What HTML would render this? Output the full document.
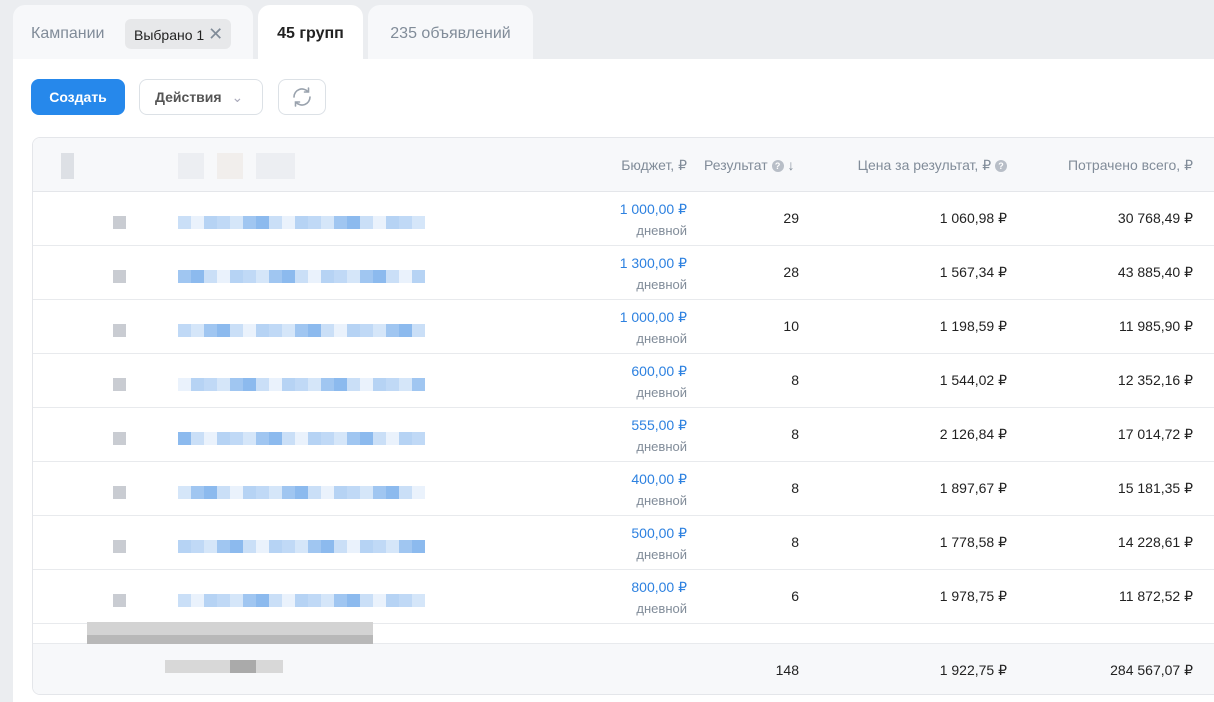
<!DOCTYPE html>
<html><head><meta charset="utf-8"><style>
*{box-sizing:border-box;margin:0;padding:0}
body{width:1214px;height:702px;overflow:hidden;background:#ebedf0;font-family:"Liberation Sans",sans-serif;position:relative;color:#222}
.a{position:absolute}
.tab{position:absolute;top:5px;height:54px;border-radius:12px 12px 0 0;background:#f7f8fa;font-size:16px;color:#818c99;line-height:58px}
.panel{position:absolute;left:13px;top:59px;width:1201px;height:643px;background:#fff}
.tbl{position:absolute;left:32px;top:137px;width:1200px;height:558px;border:1px solid #e4e6ea;border-radius:8px;background:#fff;overflow:hidden}
.hdr{position:absolute;left:0;top:0;width:100%;height:54px;background:#f7f8fa;border-bottom:1px solid #e4e6ea;font-size:14px;color:#818c99}
.row{position:absolute;left:0;width:100%;height:54px;border-bottom:1px solid #e8eaed;font-size:14px}
.r{position:absolute;text-align:right}
.b{color:#2d81e0}
.s{color:#818c99;font-size:13px}
.px{position:absolute;height:13px}
.q{display:inline-block;width:12px;height:12px;border-radius:50%;background:#b8bec7;color:#fff;font-size:9px;line-height:12px;text-align:center;vertical-align:1px;font-weight:bold}
</style></head><body>
<div class="tab" style="left:13px;width:240px"><span style="position:absolute;left:18px">Кампании</span>
<span style="position:absolute;left:112px;top:14px;height:30px;width:106px;background:#e7e8ea;border-radius:6px;font-size:14px;color:#222;line-height:30px;padding-left:9px">Выбрано 1 <span style="color:#818c99;font-size:18px">✕</span></span></div>
<div class="tab" style="left:258px;width:105px;background:#fff;color:#222;font-weight:bold;text-align:center">45 групп</div>
<div class="tab" style="left:368px;width:165px;text-align:center">235 объявлений</div>
<div class="panel"></div>
<div class="a" style="left:31px;top:79px;width:94px;height:36px;background:#2688eb;border-radius:8px;color:#fff;font-size:14px;font-weight:bold;text-align:center;line-height:36px">Создать</div>
<div class="a" style="left:139px;top:79px;width:124px;height:36px;border:1px solid #dce1e6;border-radius:8px;font-size:14px;font-weight:bold;color:#555;line-height:34px;padding-left:15px">Действия <span style="color:#aab;font-weight:normal;margin-left:6px">&#8964;</span></div>
<div class="a" style="left:278px;top:79px;width:48px;height:36px;border:1px solid #dce1e6;border-radius:8px">
<svg width="48" height="36" viewBox="0 0 48 36" style="position:absolute;left:-1px;top:-1px"><g fill="none" stroke="#99a2ad" stroke-width="1.6" stroke-linecap="round"><path d="M16 18a8 8 0 0 1 14-5.3M32 18a8 8 0 0 1-14 5.3"/><path d="M30.5 9v4h-4M17.5 27v-4h4"/></g></svg></div>
<div class="tbl">
<div class="hdr">
<div class="px" style="left:28px;top:15px;width:13px;height:26px;background:#dde0e5"></div>
<div class="px" style="left:145px;top:15px;width:26px;height:26px;background:#eceef2"></div>
<div class="px" style="left:184px;top:15px;width:26px;height:26px;background:#f1eeec"></div>
<div class="px" style="left:223px;top:15px;width:39px;height:26px;background:#eceef2"></div>
<div class="r" style="right:544px;top:19px">Бюджет, ₽</div>
<div class="a" style="left:671px;top:19px">Результат <span class="q">?</span> ↓</div>
<div class="r" style="right:224px;top:19px">Цена за результат, ₽ <span class="q">?</span></div>
<div class="r" style="right:38px;top:19px">Потрачено всего, ₽</div>
</div>
<div id="rows"></div>
<div class="a" style="left:0;top:486px;width:100%;height:20px;background:#fff;border-bottom:1px solid #e8eaed"></div>
<div class="a" style="left:54px;top:484px;width:286px;height:26px;background:linear-gradient(#d3d3d3 50%,#b8b8b8 50%)"></div>
<div class="a" style="left:0;top:506px;width:100%;height:52px;background:#f7f8fa;font-size:14px">
<div class="px" style="left:132px;top:16px;width:118px;background:#d8d8d8"></div>
<div class="px" style="left:197px;top:16px;width:26px;background:#aaa"></div>
<div class="r" style="right:432px;top:18px">148</div>
<div class="r" style="right:224px;top:18px">1 922,75 ₽</div>
<div class="r" style="right:38px;top:18px">284 567,07 ₽</div>
</div>
</div>
<script>
var d=[["1 000,00",29,"1 060,98","30 768,49"],["1 300,00",28,"1 567,34","43 885,40"],["1 000,00",10,"1 198,59","11 985,90"],["600,00",8,"1 544,02","12 352,16"],["555,00",8,"2 126,84","17 014,72"],["400,00",8,"1 897,67","15 181,35"],["500,00",8,"1 778,58","14 228,61"],["800,00",6,"1 978,75","11 872,52"]];
var h="";d.forEach(function(r,i){var t=54+i*54;
var bl="";for(var k=0;k<19;k++){var a=[0.25,0.45,0.3,0.1,0.55,0.2,0.35][ (k*3+i)%7];bl+='<div class="px" style="left:'+(145+k*13)+'px;top:24px;width:13px;background:rgba(45,129,224,'+a+')"></div>';}
h+='<div class="row" style="top:'+t+'px">'+'<div class="px" style="left:80px;top:24px;width:13px;background:#c9ccd2"></div>'+bl+
'<div class="r b" style="right:544px;top:9px">'+r[0]+' ₽</div><div class="r s" style="right:544px;top:31px">дневной</div>'+
'<div class="r" style="right:432px;top:18px">'+r[1]+'</div><div class="r" style="right:224px;top:18px">'+r[2]+' ₽</div><div class="r" style="right:38px;top:18px">'+r[3]+' ₽</div></div>';});
document.getElementById("rows").innerHTML=h;
</script>
</body></html>
